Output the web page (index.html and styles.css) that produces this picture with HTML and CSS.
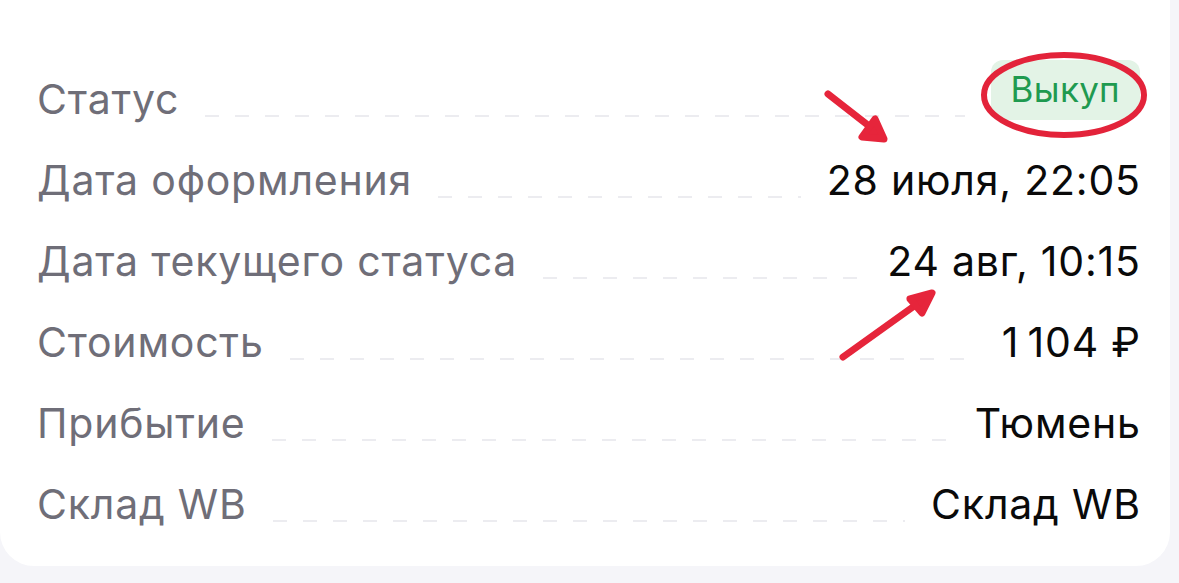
FILE: index.html
```html
<!DOCTYPE html>
<html lang="ru">
<head>
<meta charset="utf-8">
<title>Детали заказа</title>
<link rel="stylesheet" href="styles.css">
</head>
<body>
<div class="page">
  <section class="card">
    <div class="row">
      <span class="label">Статус</span>
      <span class="leader"></span>
      <span class="badge">Выкуп</span>
    </div>
    <div class="row">
      <span class="label">Дата оформления</span>
      <span class="leader"></span>
      <span class="value">28 июля, 22:05</span>
    </div>
    <div class="row">
      <span class="label">Дата текущего статуса</span>
      <span class="leader"></span>
      <span class="value">24 авг, 10:15</span>
    </div>
    <div class="row">
      <span class="label">Стоимость</span>
      <span class="leader"></span>
      <span class="value">1&#8201;104 ₽</span>
    </div>
    <div class="row">
      <span class="label">Прибытие</span>
      <span class="leader"></span>
      <span class="value">Тюмень</span>
    </div>
    <div class="row">
      <span class="label">Склад WB</span>
      <span class="leader"></span>
      <span class="value">Склад WB</span>
    </div>
  </section>

  <!-- hand-drawn markup layer -->
  <svg class="marks" width="1179" height="583" viewBox="0 0 1179 583" aria-hidden="true">
    <ellipse cx="1064" cy="95" rx="80" ry="40" fill="none" stroke="#e3233a" stroke-width="6"/>
    <g stroke="#e6253b" stroke-width="7" stroke-linecap="round" stroke-linejoin="round" fill="#e6253b">
      <line x1="828" y1="94" x2="878" y2="133"/>
      <polygon points="884,139 875,119 862,137"/>
      <line x1="843" y1="357" x2="924" y2="299"/>
      <polygon points="932,293 910,299 922,313"/>
    </g>
  </svg>
</div>
</body>
</html>
```

FILE: styles.css
```css
html, body {
  margin: 0;
  padding: 0;
}

body {
  background: #f5f5f9;
  font-family: Inter, Roboto, "Noto Sans", sans-serif;
}

.page {
  position: relative;
  width: 1179px;
  height: 583px;
  overflow: hidden;
}

.card {
  width: 1170px;
  box-sizing: border-box;
  background: #ffffff;
  border-radius: 0 0 34px 34px;
  padding: 59px 30px 21px 37px;
  display: flex;
  flex-direction: column;
}

.row {
  display: flex;
  align-items: flex-start;
  height: 81px;
  font-size: 41px;
  line-height: 81px;
  letter-spacing: 0.8px;
}

.label {
  color: #6f6e78;
  white-space: nowrap;
}

.value {
  color: #0a0a0a;
  white-space: nowrap;
  margin-right: -0.8px;
}

.leader {
  flex: 1;
  height: 2px;
  margin: 56px 26px 0;
  background: repeating-linear-gradient(to right, #ececf0 0 14px, transparent 14px 30px);
}

.badge {
  margin-top: 1px;
  height: 60px;
  line-height: 58px;
  padding: 0 20px;
  border-radius: 12px;
  background: #e3f3e6;
  color: #1f9a50;
  font-size: 35px;
  letter-spacing: 0.3px;
  white-space: nowrap;
}

.marks {
  position: absolute;
  left: 0;
  top: 0;
  pointer-events: none;
}
```
